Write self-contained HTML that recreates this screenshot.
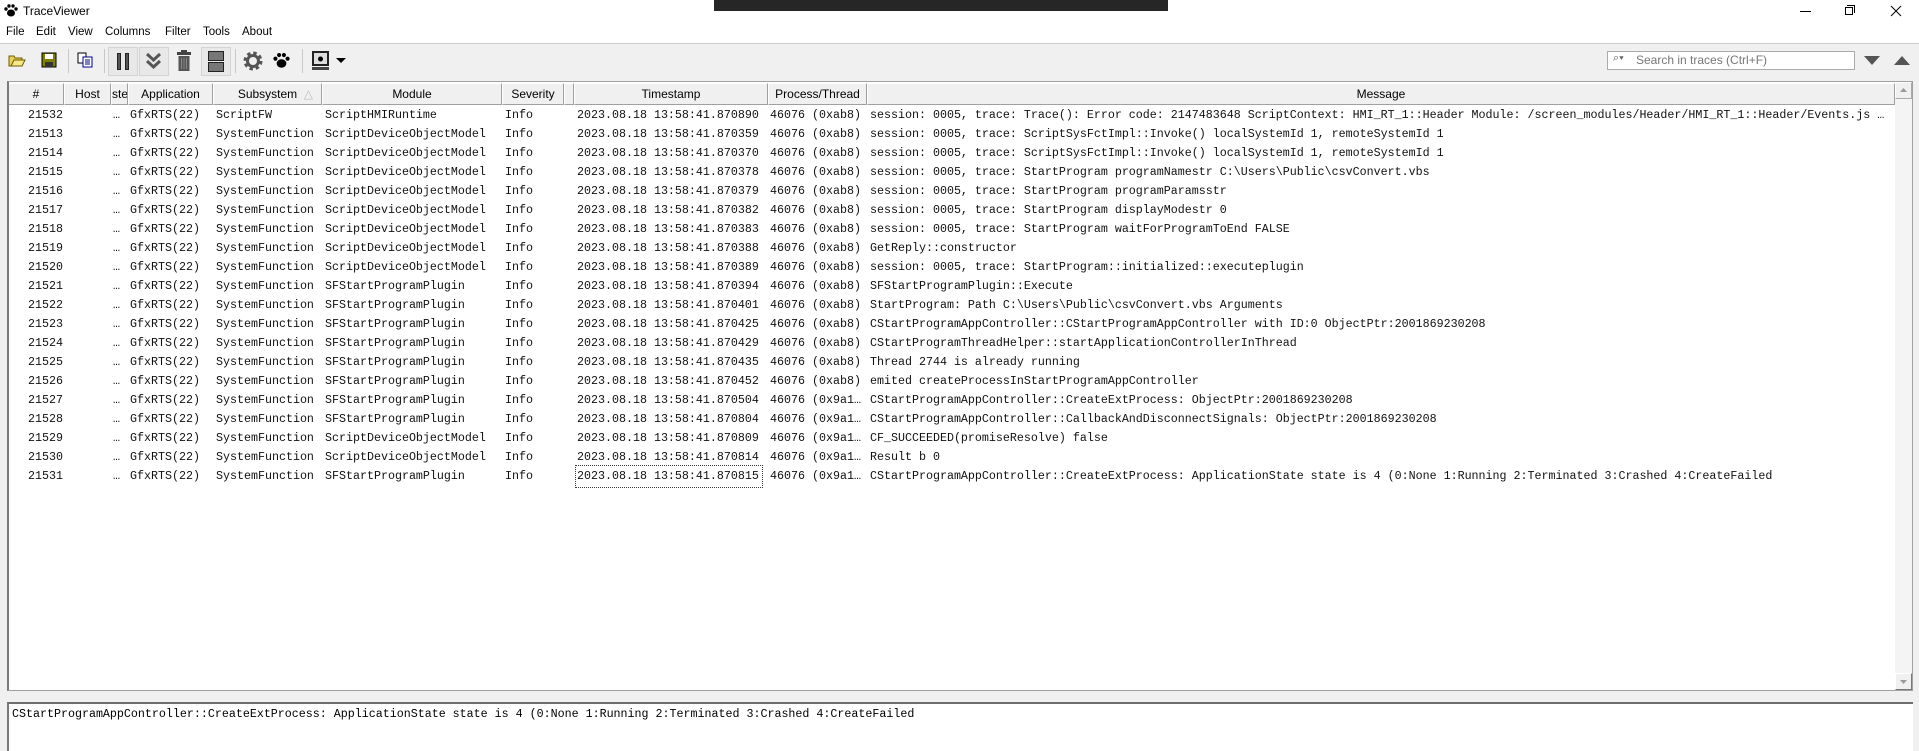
<!DOCTYPE html>
<html><head><meta charset="utf-8"><style>
*{box-sizing:border-box;margin:0;padding:0}
body{width:1919px;height:751px;overflow:hidden;background:#f0f0f0;font-family:"Liberation Sans",sans-serif;position:relative}
.abs{position:absolute}
#title{left:0;top:0;width:1919px;height:22px;background:#fff}
#menu{left:0;top:22px;width:1919px;height:21px;background:#fff;font-size:11.5px}
#menu span{position:absolute;top:4px}
#tb{left:0;top:43px;width:1919px;height:36px;background:#f0f0f0;border-top:1px solid #ccc}
.sep{position:absolute;top:5px;width:1px;height:24px;background:#c8c8c8}
.pr{position:absolute;top:3px;width:30px;height:29px;background:#e8e8e8;border:1px solid #d4d4d4}
#grid{left:7px;top:81px;width:1906px;height:610px;background:#fff;border:1px solid #a0a0a0;border-left:2px solid #7a7a7a;overflow:hidden}
.hd{position:absolute;top:1px;height:22px;background:#f0f0f0;border:1px solid #a0a0a0;border-top-color:#fff;border-left-color:#fff;font-size:12px;text-align:center;line-height:20px;color:#000;overflow:hidden;white-space:nowrap}
.row{position:absolute;left:0;height:19px;width:1890px;font-family:"Liberation Mono",monospace;font-size:11.67px;line-height:19px;white-space:nowrap;color:#111}
.row span{position:absolute;top:0}
.a{left:19px}.b{left:104px}.c{left:121px}.d{left:207px}.e{left:316px}.f{left:496px}.g{left:568px}.h{left:761px}.i{left:861px}
#sb{left:1895px;top:82px;width:17px;height:608px;background:#f4f4f4}
#detail{left:7px;top:702px;width:1906px;height:49px;background:#fff;border-top:2px solid #6e6e6e;border-left:2px solid #7a7a7a;font-family:"Liberation Mono",monospace;font-size:11.67px;padding:3px 0 0 3px}
</style></head><body>
<div id="title" class="abs">
 <svg class="abs" style="left:4px;top:4px" width="14" height="13" viewBox="0 0 14 13"><ellipse cx="7" cy="9" rx="4" ry="3.5"/><circle cx="2" cy="5" r="1.7"/><circle cx="5" cy="2" r="1.7"/><circle cx="9" cy="2" r="1.7"/><circle cx="12" cy="5" r="1.7"/></svg>
 <span class="abs" style="left:23px;top:4px;font-size:12px">TraceViewer</span>
 <div class="abs" style="left:714px;top:0;width:454px;height:11px;background:#262626"></div>
 <div class="abs" style="left:1800px;top:11px;width:11px;height:1px;background:#000"></div>
 <div class="abs" style="left:1845px;top:7px;width:8px;height:8px;border:1px solid #000;background:#fff"></div>
 <div class="abs" style="left:1847px;top:5px;width:8px;height:8px;border-top:1px solid #000;border-right:1px solid #000"></div>
 <svg class="abs" style="left:1890px;top:5px" width="12" height="12"><path d="M1 1L11 11M11 1L1 11" stroke="#000" stroke-width="1"/></svg>
</div>
<div id="menu" class="abs"><span style="left:6px">File</span><span style="left:36px">Edit</span><span style="left:68px">View</span><span style="left:105px">Columns</span><span style="left:165px">Filter</span><span style="left:203px">Tools</span><span style="left:242px">About</span></div>
<div id="tb" class="abs">
 <svg class="abs" style="left:8px;top:8px" width="18" height="16"><path d="M1 4h5l1 2h7v8H1z" fill="#e8d35a" stroke="#6b5a00"/><path d="M3 14l3-6h11l-3 6z" fill="#f7e98a" stroke="#6b5a00"/></svg>
 <svg class="abs" style="left:41px;top:8px" width="16" height="16"><rect x="1" y="1" width="14" height="14" fill="#808000" stroke="#000"/><rect x="4" y="2" width="8" height="5" fill="#fff"/><rect x="4" y="10" width="8" height="5" fill="#333"/></svg>
 <div class="sep" style="left:68px"></div>
 <svg class="abs" style="left:77px;top:8px" width="16" height="16"><rect x="1" y="1" width="8" height="10" fill="#fff" stroke="#000"/><rect x="6" y="5" width="9" height="10" fill="#fff" stroke="#00008b"/><path d="M8 8h5M8 10h5M8 12h5" stroke="#00008b"/></svg>
 <div class="sep" style="left:104px"></div>
 <div class="pr" style="left:108px"></div><div class="pr" style="left:139px"></div><div class="pr" style="left:201px"></div>
 <div class="abs" style="left:117px;top:9px;width:4px;height:17px;background:#555;border:1px solid #222"></div>
 <div class="abs" style="left:125px;top:9px;width:4px;height:17px;background:#555;border:1px solid #222"></div>
 <svg class="abs" style="left:145px;top:8px" width="17" height="19"><path d="M2 2l6.5 6 6.5-6M2 9l6.5 6 6.5-6" fill="none" stroke="#555" stroke-width="3"/></svg>
 <svg class="abs" style="left:177px;top:6px" width="14" height="21"><rect x="4" y="0" width="6" height="2" fill="#444"/><rect x="0" y="2" width="14" height="3" fill="#444"/><rect x="1.5" y="6" width="11" height="15" fill="#555"/><path d="M4.5 8v11M7 8v11M9.5 8v11" stroke="#888"/></svg>
 <div class="abs" style="left:208px;top:7px;width:16px;height:10px;background:#777;border:1px solid #222"></div>
 <div class="abs" style="left:208px;top:18px;width:16px;height:10px;background:#777;border:1px solid #222"></div>
 <div class="sep" style="left:235px"></div>
 <svg class="abs" style="left:243px;top:7px" width="20" height="20" viewBox="0 0 20 20"><circle cx="10" cy="10" r="7" fill="none" stroke="#555" stroke-width="5" stroke-dasharray="3 2.5"/><circle cx="10" cy="10" r="5.5" fill="none" stroke="#555" stroke-width="3"/></svg>
 <svg class="abs" style="left:273px;top:8px" width="17" height="17" viewBox="0 0 14 13"><ellipse cx="7" cy="9" rx="4" ry="3.5"/><circle cx="2" cy="5" r="1.7"/><circle cx="5" cy="2" r="1.7"/><circle cx="9" cy="2" r="1.7"/><circle cx="12" cy="5" r="1.7"/></svg>
 <div class="sep" style="left:302px"></div>
 <svg class="abs" style="left:312px;top:7px" width="17" height="21"><rect x="1" y="1" width="15" height="13" fill="#ddd" stroke="#222" stroke-width="2"/><circle cx="8.5" cy="8" r="2.5"/><rect x="0" y="16" width="17" height="3" fill="#444"/></svg>
 <svg class="abs" style="left:336px;top:14px" width="10" height="6"><path d="M0 0h10L5 5z"/></svg>
 <div class="abs" style="left:1607px;top:7px;width:248px;height:19px;background:#fff;border:1px solid #aaa;font-size:12px;color:#777;line-height:17px;padding-left:28px">Search in traces (Ctrl+F)</div>
 <span class="abs" style="left:1613px;top:8px;font-size:11px;color:#666">⌕▾</span>
 <svg class="abs" style="left:1864px;top:12px" width="16" height="10"><path d="M0 0h16L8 9z" fill="#555"/></svg>
 <svg class="abs" style="left:1894px;top:12px" width="16" height="10"><path d="M0 9h16L8 0z" fill="#555"/></svg>
</div>
<div id="grid" class="abs">
 <div class="hd" style="left:-1px;width:56px">#</div>
 <div class="hd" style="left:55px;width:47px">Host</div>
 <div class="hd" style="left:102px;width:17px">ste</div>
 <div class="hd" style="left:119px;width:85px">Application</div>
 <div class="hd" style="left:204px;width:109px">Subsystem<span style="position:absolute;right:8px;color:#bbb">△</span></div>
 <div class="hd" style="left:313px;width:180px">Module</div>
 <div class="hd" style="left:493px;width:62px">Severity</div>
 <div class="hd" style="left:555px;width:10px"></div>
 <div class="hd" style="left:565px;width:194px">Timestamp</div>
 <div class="hd" style="left:759px;width:99px">Process/Thread</div>
 <div class="hd" style="left:858px;width:1028px">Message</div>
</div>
<div id="sb" class="abs">
 <div class="abs" style="left:0;top:0;width:17px;height:17px;background:#f0f0f0;border:1px solid #aaa;border-top-color:#fff;border-left-color:#fff"><svg class="abs" style="left:4px;top:5px" width="7" height="4"><path d="M0 4h7L3.5 0z" fill="#999"/></svg></div>
 <div class="abs" style="left:0;top:591px;width:17px;height:17px;background:#f0f0f0;border:1px solid #777;border-top-color:#fff;border-left-color:#fff"><svg class="abs" style="left:4px;top:6px" width="7" height="4"><path d="M0 0h7L3.5 4z" fill="#999"/></svg></div>
</div>
<div class="abs" style="left:9px;top:106px;width:1886px;height:390px">
<div class="row" style="top:0"><span class="a">21532</span><span class="b">…</span><span class="c">GfxRTS(22)</span><span class="d">ScriptFW</span><span class="e">ScriptHMIRuntime</span><span class="f">Info</span><span class="g">2023.08.18 13:58:41.870890</span><span class="h">46076 (0xab8)</span><span class="i">session: 0005, trace: Trace(): Error code: 2147483648 ScriptContext: HMI_RT_1::Header Module: /screen_modules/Header/HMI_RT_1::Header/Events.js …</span></div>
<div class="row" style="top:19px"><span class="a">21513</span><span class="b">…</span><span class="c">GfxRTS(22)</span><span class="d">SystemFunction</span><span class="e">ScriptDeviceObjectModel</span><span class="f">Info</span><span class="g">2023.08.18 13:58:41.870359</span><span class="h">46076 (0xab8)</span><span class="i">session: 0005, trace: ScriptSysFctImpl::Invoke() localSystemId 1, remoteSystemId 1</span></div>
<div class="row" style="top:38px"><span class="a">21514</span><span class="b">…</span><span class="c">GfxRTS(22)</span><span class="d">SystemFunction</span><span class="e">ScriptDeviceObjectModel</span><span class="f">Info</span><span class="g">2023.08.18 13:58:41.870370</span><span class="h">46076 (0xab8)</span><span class="i">session: 0005, trace: ScriptSysFctImpl::Invoke() localSystemId 1, remoteSystemId 1</span></div>
<div class="row" style="top:57px"><span class="a">21515</span><span class="b">…</span><span class="c">GfxRTS(22)</span><span class="d">SystemFunction</span><span class="e">ScriptDeviceObjectModel</span><span class="f">Info</span><span class="g">2023.08.18 13:58:41.870378</span><span class="h">46076 (0xab8)</span><span class="i">session: 0005, trace: StartProgram programNamestr C:\Users\Public\csvConvert.vbs</span></div>
<div class="row" style="top:76px"><span class="a">21516</span><span class="b">…</span><span class="c">GfxRTS(22)</span><span class="d">SystemFunction</span><span class="e">ScriptDeviceObjectModel</span><span class="f">Info</span><span class="g">2023.08.18 13:58:41.870379</span><span class="h">46076 (0xab8)</span><span class="i">session: 0005, trace: StartProgram programParamsstr</span></div>
<div class="row" style="top:95px"><span class="a">21517</span><span class="b">…</span><span class="c">GfxRTS(22)</span><span class="d">SystemFunction</span><span class="e">ScriptDeviceObjectModel</span><span class="f">Info</span><span class="g">2023.08.18 13:58:41.870382</span><span class="h">46076 (0xab8)</span><span class="i">session: 0005, trace: StartProgram displayModestr 0</span></div>
<div class="row" style="top:114px"><span class="a">21518</span><span class="b">…</span><span class="c">GfxRTS(22)</span><span class="d">SystemFunction</span><span class="e">ScriptDeviceObjectModel</span><span class="f">Info</span><span class="g">2023.08.18 13:58:41.870383</span><span class="h">46076 (0xab8)</span><span class="i">session: 0005, trace: StartProgram waitForProgramToEnd FALSE</span></div>
<div class="row" style="top:133px"><span class="a">21519</span><span class="b">…</span><span class="c">GfxRTS(22)</span><span class="d">SystemFunction</span><span class="e">ScriptDeviceObjectModel</span><span class="f">Info</span><span class="g">2023.08.18 13:58:41.870388</span><span class="h">46076 (0xab8)</span><span class="i">GetReply::constructor</span></div>
<div class="row" style="top:152px"><span class="a">21520</span><span class="b">…</span><span class="c">GfxRTS(22)</span><span class="d">SystemFunction</span><span class="e">ScriptDeviceObjectModel</span><span class="f">Info</span><span class="g">2023.08.18 13:58:41.870389</span><span class="h">46076 (0xab8)</span><span class="i">session: 0005, trace: StartProgram::initialized::executeplugin</span></div>
<div class="row" style="top:171px"><span class="a">21521</span><span class="b">…</span><span class="c">GfxRTS(22)</span><span class="d">SystemFunction</span><span class="e">SFStartProgramPlugin</span><span class="f">Info</span><span class="g">2023.08.18 13:58:41.870394</span><span class="h">46076 (0xab8)</span><span class="i">SFStartProgramPlugin::Execute</span></div>
<div class="row" style="top:190px"><span class="a">21522</span><span class="b">…</span><span class="c">GfxRTS(22)</span><span class="d">SystemFunction</span><span class="e">SFStartProgramPlugin</span><span class="f">Info</span><span class="g">2023.08.18 13:58:41.870401</span><span class="h">46076 (0xab8)</span><span class="i">StartProgram: Path C:\Users\Public\csvConvert.vbs Arguments</span></div>
<div class="row" style="top:209px"><span class="a">21523</span><span class="b">…</span><span class="c">GfxRTS(22)</span><span class="d">SystemFunction</span><span class="e">SFStartProgramPlugin</span><span class="f">Info</span><span class="g">2023.08.18 13:58:41.870425</span><span class="h">46076 (0xab8)</span><span class="i">CStartProgramAppController::CStartProgramAppController with ID:0 ObjectPtr:2001869230208</span></div>
<div class="row" style="top:228px"><span class="a">21524</span><span class="b">…</span><span class="c">GfxRTS(22)</span><span class="d">SystemFunction</span><span class="e">SFStartProgramPlugin</span><span class="f">Info</span><span class="g">2023.08.18 13:58:41.870429</span><span class="h">46076 (0xab8)</span><span class="i">CStartProgramThreadHelper::startApplicationControllerInThread</span></div>
<div class="row" style="top:247px"><span class="a">21525</span><span class="b">…</span><span class="c">GfxRTS(22)</span><span class="d">SystemFunction</span><span class="e">SFStartProgramPlugin</span><span class="f">Info</span><span class="g">2023.08.18 13:58:41.870435</span><span class="h">46076 (0xab8)</span><span class="i">Thread 2744 is already running</span></div>
<div class="row" style="top:266px"><span class="a">21526</span><span class="b">…</span><span class="c">GfxRTS(22)</span><span class="d">SystemFunction</span><span class="e">SFStartProgramPlugin</span><span class="f">Info</span><span class="g">2023.08.18 13:58:41.870452</span><span class="h">46076 (0xab8)</span><span class="i">emited createProcessInStartProgramAppController</span></div>
<div class="row" style="top:285px"><span class="a">21527</span><span class="b">…</span><span class="c">GfxRTS(22)</span><span class="d">SystemFunction</span><span class="e">SFStartProgramPlugin</span><span class="f">Info</span><span class="g">2023.08.18 13:58:41.870504</span><span class="h">46076 (0x9a1…</span><span class="i">CStartProgramAppController::CreateExtProcess: ObjectPtr:2001869230208</span></div>
<div class="row" style="top:304px"><span class="a">21528</span><span class="b">…</span><span class="c">GfxRTS(22)</span><span class="d">SystemFunction</span><span class="e">SFStartProgramPlugin</span><span class="f">Info</span><span class="g">2023.08.18 13:58:41.870804</span><span class="h">46076 (0x9a1…</span><span class="i">CStartProgramAppController::CallbackAndDisconnectSignals: ObjectPtr:2001869230208</span></div>
<div class="row" style="top:323px"><span class="a">21529</span><span class="b">…</span><span class="c">GfxRTS(22)</span><span class="d">SystemFunction</span><span class="e">ScriptDeviceObjectModel</span><span class="f">Info</span><span class="g">2023.08.18 13:58:41.870809</span><span class="h">46076 (0x9a1…</span><span class="i">CF_SUCCEEDED(promiseResolve) false</span></div>
<div class="row" style="top:342px"><span class="a">21530</span><span class="b">…</span><span class="c">GfxRTS(22)</span><span class="d">SystemFunction</span><span class="e">ScriptDeviceObjectModel</span><span class="f">Info</span><span class="g">2023.08.18 13:58:41.870814</span><span class="h">46076 (0x9a1…</span><span class="i">Result b 0</span></div>
<div class="row" style="top:361px"><span class="a">21531</span><span class="b">…</span><span class="c">GfxRTS(22)</span><span class="d">SystemFunction</span><span class="e">SFStartProgramPlugin</span><span class="f">Info</span><span class="g" style="outline:1px dotted #333;outline-offset:1px;padding-right:2px">2023.08.18 13:58:41.870815</span><span class="h">46076 (0x9a1…</span><span class="i">CStartProgramAppController::CreateExtProcess: ApplicationState state is 4 (0:None 1:Running 2:Terminated 3:Crashed 4:CreateFailed</span></div>
</div>
<div id="detail" class="abs">CStartProgramAppController::CreateExtProcess: ApplicationState state is 4 (0:None 1:Running 2:Terminated 3:Crashed 4:CreateFailed</div>
</body></html>
